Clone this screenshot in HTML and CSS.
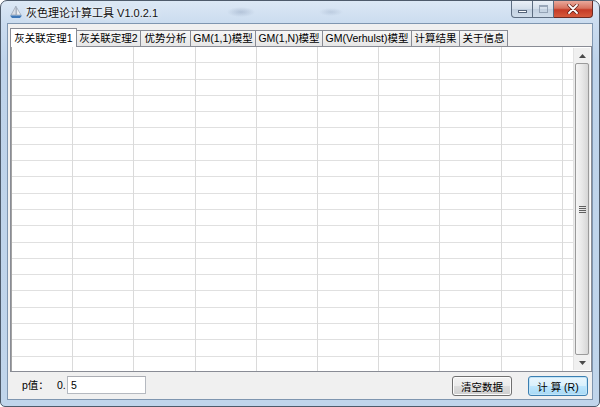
FILE: index.html
```html
<!DOCTYPE html>
<html>
<head>
<meta charset="utf-8">
<title>灰色理论计算工具</title>
<link rel="stylesheet" href="styles.css">
</head>
<body>
<div class="window">
  <div class="titlebar">
    <svg class="app-icon" width="14" height="14" viewBox="0 0 14 14">
      <path d="M7 1 L7 10 L2 10 Z" fill="#d7dde6" stroke="#8a96a6" stroke-width="0.6"/>
      <path d="M7.6 2.5 L7.6 10 L12 10 Z" fill="#eef1f5" stroke="#8a96a6" stroke-width="0.6"/>
      <path d="M1 10.6 L13 10.6 L11 13 L3 13 Z" fill="#3f78b8"/>
    </svg>
    <span class="title">灰色理论计算工具 V1.0.2.1</span>
    <div class="caption">
      <div class="cap cap-min"><span class="glyph-min"></span></div>
      <div class="cap cap-max"><span class="glyph-max"></span></div>
      <div class="cap cap-close">
        <svg width="12" height="10" viewBox="0 0 12 10">
          <path d="M2 1 L10 9 M10 1 L2 9" stroke="#5a1a12" stroke-width="3.2" stroke-linecap="round"/>
          <path d="M2 1 L10 9 M10 1 L2 9" stroke="#ffffff" stroke-width="1.8" stroke-linecap="round"/>
        </svg>
      </div>
    </div>
  </div>
  <div class="client">
    <div class="tabs">
      <div class="tab active">灰关联定理1</div>
      <div class="tab">灰关联定理2</div>
      <div class="tab">优势分析</div>
      <div class="tab">GM(1,1)模型</div>
      <div class="tab">GM(1,N)模型</div>
      <div class="tab">GM(Verhulst)模型</div>
      <div class="tab">计算结果</div>
      <div class="tab">关于信息</div>
    </div>
    <div class="panel">
      <div class="grid"></div>
      <div class="vscroll">
        <div class="sb-btn">
          <svg width="7" height="4" viewBox="0 0 7 4"><path d="M0 4 L3.5 0 L7 4 Z" fill="#4a4a4a"/></svg>
        </div>
        <div class="thumb">
          <span class="grip"></span>
        </div>
        <div class="sb-btn">
          <svg width="7" height="4" viewBox="0 0 7 4"><path d="M0 0 L7 0 L3.5 4 Z" fill="#4a4a4a"/></svg>
        </div>
      </div>
    </div>
    <div class="bottombar">
      <span class="plabel">p值：</span>
      <span class="prefix">0.</span>
      <input class="pinput" type="text" value="5">
      <span class="spacer"></span>
      <button class="btn">清空数据</button>
      <button class="btn btn-default">计 算 (R)</button>
    </div>
  </div>
</div>
</body>
</html>
```

FILE: styles.css
```css
* { box-sizing: border-box; }

html, body { margin: 0; padding: 0; }

body {
  width: 600px;
  height: 407px;
  background: #ffffff;
  font-family: "Liberation Sans", "Noto Sans CJK SC", sans-serif;
  font-size: 10.5px;
  color: #000;
  overflow: hidden;
}

.window {
  width: 600px;
  height: 407px;
  border: 1px solid #4e5b6b;
  border-radius: 7px 7px 5px 5px;
  background:
    radial-gradient(ellipse 14px 5px at 240px 11px, rgba(120,140,170,0.35), transparent),
    radial-gradient(ellipse 12px 4px at 330px 11px, rgba(120,140,170,0.25), transparent),
    linear-gradient(to bottom, #dce8f5 0, #cbdcef 22px, #bed3ea 60px, #c0d5eb 100%);
  padding: 0 6px 6px 6px;
  display: flex;
  flex-direction: column;
  overflow: hidden;
}

.titlebar {
  height: 22px;
  display: flex;
  align-items: center;
  padding-left: 2px;
}

.app-icon { flex: none; margin-top: -1px; }

.title {
  margin-left: 3px;
  font-family: "Liberation Sans", "Noto Sans CJK SC", sans-serif;
  font-size: 11px;
  color: #111;
  text-shadow: 0 0 6px #fff, 0 0 3px #fff;
  flex: 1;
}

.caption {
  display: flex;
  align-self: flex-start;
  height: 17px;
}

.cap {
  height: 17px;
  display: flex;
  align-items: center;
  justify-content: center;
  border: 1px solid #5d6d81;
  border-top: none;
}

.cap-min {
  width: 22px;
  border-radius: 0 0 0 4px;
  background: linear-gradient(to bottom, #eaf0f7 0, #d3deea 50%, #c2d0e0 51%, #d0dcea 100%);
}

.cap-max {
  width: 21px;
  border-left: none;
  background: linear-gradient(to bottom, #eaf0f7 0, #d3deea 50%, #c2d0e0 51%, #d0dcea 100%);
}

.cap-close {
  width: 39px;
  border-left: none;
  border-color: #6d2a22;
  border-radius: 0 0 4px 0;
  background: linear-gradient(to bottom, #e9a99b 0, #d7735f 45%, #c53b26 55%, #d65a3c 100%);
}

.glyph-min {
  width: 9px;
  height: 3px;
  background: #fff;
  border: 1px solid #56657a;
  margin-top: 5px;
}

.glyph-max {
  width: 9px;
  height: 8px;
  border: 1px solid #8796aa;
  border-top-width: 2px;
  background: transparent;
  opacity: 0.8;
}

.client {
  flex: 1;
  border: 1px solid #7f96b0;
  background: #f0f0f0;
  display: flex;
  flex-direction: column;
}

.tabs {
  height: 22px;
  display: flex;
  align-items: flex-end;
  padding-left: 2px;
  position: relative;
  z-index: 1;
}

.tab {
  flex: none;
  height: 16px;
  padding: 0;
  border: 1px solid #898c95;
  border-bottom: none;
  border-left-width: 0;
  background: linear-gradient(to bottom, #f6f6f6, #e6e6e6);
  line-height: 15px;
  text-align: center;
  white-space: nowrap;
  overflow: hidden;
}

.tab:nth-child(1) { width: 67px; border-left-width: 1px; }
.tab:nth-child(2) { width: 64px; }
.tab:nth-child(3) { width: 50px; }
.tab:nth-child(4) { width: 65px; }
.tab:nth-child(5) { width: 67px; }
.tab:nth-child(6) { width: 89px; }
.tab:nth-child(7) { width: 48px; }
.tab:nth-child(8) { width: 48px; }

.tab.active {
  height: 19px;
  margin-bottom: -1px;
  background: #ffffff;
  line-height: 18px;
}

.panel {
  height: 326px;
  margin-left: 2px;
  border: 1px solid #898c95;
  background: #ffffff;
  display: flex;
}

.grid {
  flex: 1;
  border-left: 1px solid #a3a3a3;
  background-image:
    repeating-linear-gradient(to right, transparent 0 60.2px, #dadada 60.2px 61.2px),
    repeating-linear-gradient(to bottom, transparent 0 15.3px, #e0e0e0 15.3px 16.3px);
}

.vscroll {
  width: 17px;
  margin: 1px 1px 1px 0;
  background: #ececec;
  border-left: 1px solid #e2e2e2;
  display: flex;
  flex-direction: column;
}

.sb-btn {
  height: 15px;
  display: flex;
  align-items: center;
  justify-content: center;
  background: #f0f0f0;
}

.thumb {
  flex: 1;
  margin: 0 1px;
  border: 1px solid #9a9a9a;
  border-radius: 2px;
  background: linear-gradient(to right, #f6f6f6 0, #e8e8e8 50%, #d6d6d6 100%);
  display: flex;
  align-items: center;
  justify-content: center;
}

.grip {
  width: 7px;
  height: 7px;
  background: repeating-linear-gradient(to bottom, #5f5f5f 0 1px, transparent 1px 2px);
}

.bottombar {
  flex: 1;
  display: flex;
  align-items: flex-start;
  padding: 4px 4px 0 14px;
}

.plabel {
  width: 35px;
  line-height: 18px;
}

.prefix {
  width: 10px;
  line-height: 18px;
}

.pinput {
  width: 79px;
  height: 18px;
  border: 1px solid #b5b9c0;
  border-top-color: #abadb3;
  background: #fff;
  padding: 0 3px;
  margin: 0;
  font-family: "Liberation Sans", "Noto Sans CJK SC", sans-serif;
  font-size: 10.5px;
  color: #000;
  outline: none;
}

.spacer { flex: 1; }

.btn {
  width: 60px;
  height: 20px;
  margin: 0;
  padding: 0;
  border: 1px solid #707070;
  border-radius: 3px;
  background: linear-gradient(to bottom, #f3f3f3 0, #ebebeb 50%, #dddddd 51%, #cfcfcf 100%);
  font-family: "Liberation Sans", "Noto Sans CJK SC", sans-serif;
  font-size: 10.5px;
  color: #000;
  box-shadow: inset 0 0 0 1px #fcfcfc;
}

.btn + .btn { margin-left: 16px; }

.btn-default {
  border-color: #3c7fb1;
  background: linear-gradient(to bottom, #eaf6fd 0, #d9f0fc 50%, #bee6fd 51%, #a7d9f5 100%);
  box-shadow: inset 0 0 0 1px #c2e5f8;
}
```
